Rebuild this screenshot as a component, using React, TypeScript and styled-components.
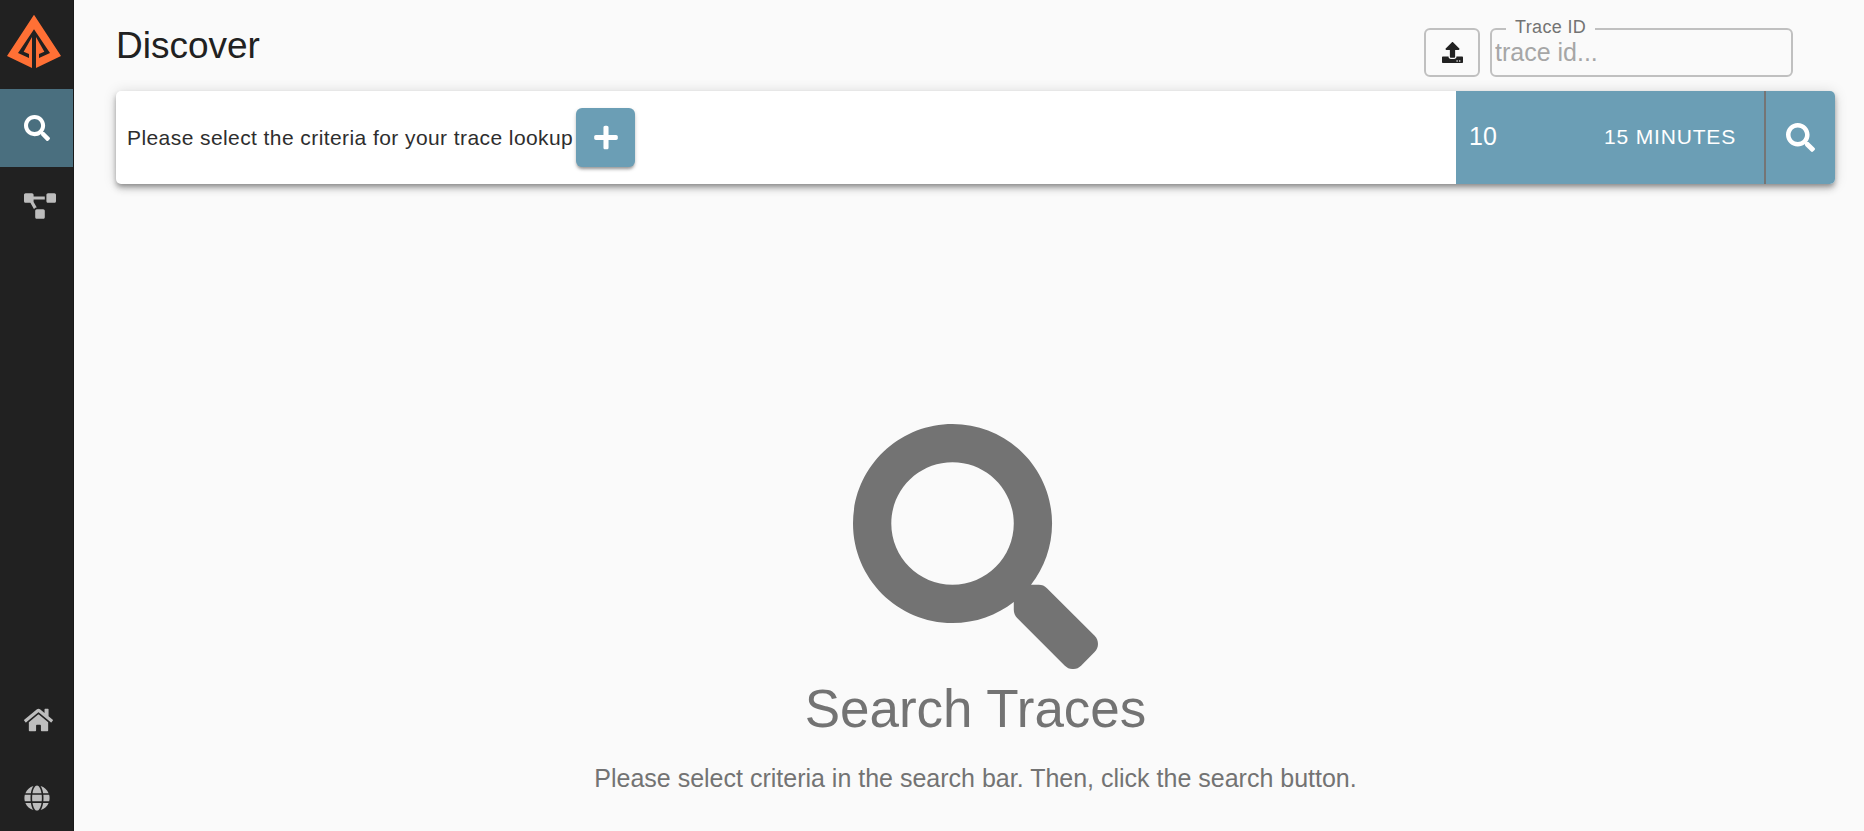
import React from "react";
import styled, { createGlobalStyle } from "styled-components";
import { FaSearch, FaPlus, FaProjectDiagram, FaHome, FaGlobe, FaUpload } from "react-icons/fa";

const GlobalStyle = createGlobalStyle`
  *, *::before, *::after { box-sizing: border-box; }
  body {
    margin: 0;
    background: #fafafa;
    color: #212121;
    font-family: "Liberation Sans", Arial, Helvetica, sans-serif;
  }
`;

const Shell = styled.div`
  display: flex;
  min-height: 100vh;
`;

const Sidebar = styled.aside`
  flex: none;
  display: flex;
  flex-direction: column;
  width: 74px;
  background: #212121;
  border-right: 1px solid #1a1a1a;
`;

const LogoLink = styled.a`
  display: block;
  height: 89px;
  padding: 13px 6px;
`;

const NavList = styled.nav`
  display: flex;
  flex-direction: column;
`;

const FooterNav = styled(NavList)`
  gap: 52px;
  margin-top: auto;
  padding: 0 24px 20px;
`;

const NavLink = styled.a<{ $active?: boolean }>`
  display: flex;
  align-items: center;
  height: 78px;
  padding-left: 24px;
  color: ${(p) => (p.$active ? "#ffffff" : "#bdbdbd")};
  background: ${(p) => (p.$active ? "#4a6f7f" : "transparent")};
`;

const FooterLink = styled.a`
  display: flex;
  height: 26px;
  color: #bdbdbd;
`;

const Icon = styled.span<{ $width: number; $height: number }>`
  display: flex;
  flex: none;
  svg {
    width: ${(p) => p.$width}px;
    height: ${(p) => p.$height}px;
  }
`;

const Main = styled.main`
  flex: 1;
  min-width: 0;
  display: flex;
  flex-direction: column;
  padding: 0 29px 0 42px;
`;

const Header = styled.header`
  display: flex;
  justify-content: space-between;
  height: 91px;
  padding-right: 42px;
`;

const Title = styled.h1`
  margin: 0;
  padding-top: 24px;
  font-size: 37px;
  line-height: 44px;
  font-weight: 400;
`;

const HeaderTools = styled.div`
  display: flex;
  align-items: flex-end;
  gap: 10px;
  padding-bottom: 14px;
`;

const UploadButton = styled.button`
  display: flex;
  align-items: center;
  justify-content: center;
  width: 56px;
  height: 49px;
  padding: 0;
  border: 2px solid #c0c0c0;
  border-radius: 6px;
  background: transparent;
  color: #212121;
`;

const TraceField = styled.fieldset`
  width: 303px;
  height: 59px;
  min-width: 0;
  margin: 0;
  padding: 0 3px;
  border: 2px solid #c0c0c0;
  border-radius: 6px;
`;

const TraceLegend = styled.legend`
  margin: 0 0 -2px 11px;
  padding: 0 9px 4px;
  color: #737373;
  font-size: 18px;
  line-height: 18px;
  letter-spacing: 0.02em;
`;

const TraceInput = styled.input`
  display: block;
  width: 100%;
  height: 28px;
  padding: 0;
  border: 0;
  outline: 0;
  background: transparent;
  font: inherit;
  font-size: 25px;
  &::placeholder { color: #a6a6a6; opacity: 1; }
`;

const SearchBar = styled.form`
  display: flex;
  height: 93px;
  border-radius: 5px;
  background: #ffffff;
  box-shadow: 0 3px 5px -1px rgba(0, 0, 0, 0.3), 0 5px 7px rgba(0, 0, 0, 0.16), 0 1px 14px rgba(0, 0, 0, 0.14);
`;

const Criteria = styled.div`
  flex: 1;
  display: flex;
  align-items: center;
  gap: 3px;
  padding-left: 11px;
  color: #2e2e2e;
  font-size: 21px;
  letter-spacing: 0.02em;
`;

const AddButton = styled.button`
  display: flex;
  align-items: center;
  justify-content: center;
  width: 59px;
  height: 59px;
  padding: 0;
  border: 0;
  border-radius: 6px;
  background: #6b9eb5;
  color: #ffffff;
  box-shadow: 0 3px 3px -1px rgba(0, 0, 0, 0.3), 0 2px 4px rgba(0, 0, 0, 0.16);
`;

const Controls = styled.div`
  display: flex;
  overflow: hidden;
  border-radius: 0 5px 5px 0;
  background: #6b9eb5;
`;

const LimitInput = styled.input`
  width: 120px;
  padding: 0 0 2px 13px;
  border: 0;
  outline: 0;
  background: transparent;
  color: #ffffff;
  font: inherit;
  font-size: 25px;
`;

const LookbackButton = styled.button`
  width: 188px;
  padding: 0 0 2px;
  border: 0;
  background: transparent;
  color: #ffffff;
  font: inherit;
  font-size: 21px;
  letter-spacing: 0.04em;
  text-transform: uppercase;
`;

const RunButton = styled.button`
  display: flex;
  align-items: center;
  justify-content: center;
  width: 71px;
  padding: 0;
  border: 0;
  border-left: 2px solid #757575;
  background: transparent;
  color: #ffffff;
`;

const EmptyState = styled.section`
  display: flex;
  flex-direction: column;
  align-items: center;
  padding: 240px 0 32px;
  color: #737373;
  text-align: center;
`;

const EmptyTitle = styled.h2`
  margin: 10px 0 0;
  font-size: 53px;
  line-height: 60px;
  font-weight: 400;
`;

const EmptyText = styled.p`
  margin: 24px 0 0;
  font-size: 25px;
  line-height: 30px;
`;

const Logo = () => (
  <svg width="62" height="60" viewBox="18 39 186 180" fill="#ff7035" aria-hidden="true">
    <path d="M102 44 L183 168 L108 204 V111 L133 155 L117 162 V174 L150 159 L102 88 L54 159 L87 174 V162 L71 155 L96 111 V204 L21 168 Z" />
  </svg>
);

export default function App() {
  return (
    <>
      <GlobalStyle />
      <Shell>
        <Sidebar>
          <LogoLink href="#" aria-label="Start"><Logo /></LogoLink>
          <NavList aria-label="Main">
            <NavLink href="#discover" aria-label="Discover" aria-current="page" $active>
              <Icon $width={26} $height={26}><FaSearch /></Icon>
            </NavLink>
            <NavLink href="#dependencies" aria-label="Dependencies">
              <Icon $width={32} $height={26}><FaProjectDiagram /></Icon>
            </NavLink>
          </NavList>
          <FooterNav aria-label="Links">
            <FooterLink href="#home" aria-label="Home">
              <Icon $width={29} $height={26}><FaHome /></Icon>
            </FooterLink>
            <FooterLink href="#language" aria-label="Language">
              <Icon $width={26} $height={26}><FaGlobe /></Icon>
            </FooterLink>
          </FooterNav>
        </Sidebar>
        <Main>
          <Header>
            <Title>Discover</Title>
            <HeaderTools>
              <UploadButton type="button" aria-label="Upload JSON">
                <Icon $width={21} $height={21}><FaUpload /></Icon>
              </UploadButton>
              <TraceField>
                <TraceLegend><label htmlFor="trace-id">Trace ID</label></TraceLegend>
                <TraceInput id="trace-id" type="text" placeholder="trace id..." />
              </TraceField>
            </HeaderTools>
          </Header>
          <SearchBar onSubmit={(e) => e.preventDefault()}>
            <Criteria>
              <span>Please select the criteria for your trace lookup</span>
              <AddButton type="button" aria-label="Add criterion">
                <Icon $width={24} $height={27}><FaPlus /></Icon>
              </AddButton>
            </Criteria>
            <Controls>
              <LimitInput type="text" inputMode="numeric" aria-label="Limit" defaultValue="10" />
              <LookbackButton type="button">15 Minutes</LookbackButton>
              <RunButton type="submit" aria-label="Search">
                <Icon $width={29} $height={29}><FaSearch /></Icon>
              </RunButton>
            </Controls>
          </SearchBar>
          <EmptyState>
            <Icon $width={245} $height={245}><FaSearch /></Icon>
            <EmptyTitle>Search Traces</EmptyTitle>
            <EmptyText>Please select criteria in the search bar. Then, click the search button.</EmptyText>
          </EmptyState>
        </Main>
      </Shell>
    </>
  );
}
